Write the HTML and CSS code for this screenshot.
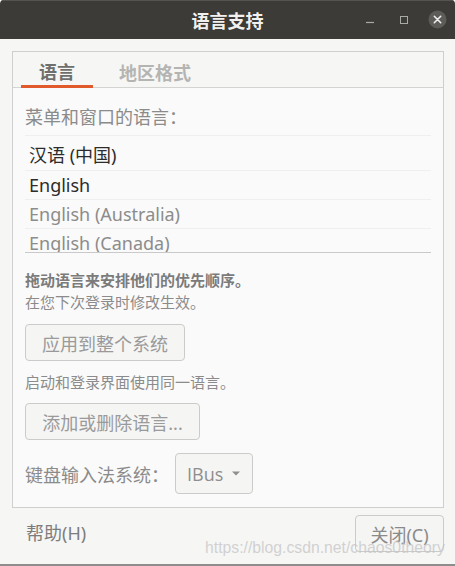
FILE: index.html
```html
<!DOCTYPE html>
<html lang="zh-CN">
<head>
<meta charset="utf-8">
<title>语言支持</title>
<link rel="stylesheet" href="styles.css">
</head>
<body>
<div class="window">
  <header class="titlebar">
    <div class="tb-side"></div>
    <div class="title">语言支持</div>
    <div class="tb-side tb-controls">
      <svg class="controls" width="84" height="39" viewBox="0 0 84 39" aria-hidden="true">
        <line x1="2" y1="22.5" x2="10" y2="22.5" stroke="#a9a9a6" stroke-width="1.2"/>
        <rect x="36.5" y="16.5" width="7" height="7" fill="none" stroke="#a9a9a6" stroke-width="1"/>
        <circle cx="73.5" cy="19.5" r="9" fill="#5d5c58"/>
        <path d="M70.3 16.3 L76.7 22.7 M76.7 16.3 L70.3 22.7" stroke="#efefef" stroke-width="1.6" stroke-linecap="round"/>
      </svg>
    </div>
  </header>

  <main class="main">
    <section class="notebook">
      <nav class="tabs">
        <div class="tab active">语言</div>
        <div class="tab">地区格式</div>
      </nav>
      <div class="page">
        <div class="label">菜单和窗口的语言：</div>
        <div class="langlist">
          <div class="row row-first dark">汉语 (中国)</div>
          <div class="row dark">English</div>
          <div class="row">English (Australia)</div>
          <div class="row">English (Canada)</div>
        </div>
        <p class="hint bold">拖动语言来安排他们的优先顺序。</p>
        <p class="hint">在您下次登录时修改生效。</p>
        <div class="btn btn-apply">应用到整个系统</div>
        <p class="hint hint-gap">启动和登录界面使用同一语言。</p>
        <div class="btn btn-add">添加或删除语言...</div>
        <div class="im-row">
          <span class="label">键盘输入法系统：</span>
          <div class="combo">
            <span class="combo-text">IBus</span>
            <svg class="combo-arrow" width="8" height="5" viewBox="0 0 8 5" aria-hidden="true"><path d="M0 0.5 H8 L4 4.5 Z" fill="#8e8e8e"/></svg>
          </div>
        </div>
      </div>
    </section>
    <footer class="footer">
      <span class="help">帮助(H)</span>
      <div class="btn btn-close">关闭(C)</div>
    </footer>
    <div class="watermark">https://blog.csdn.net/chaos0theory</div>
  </main>
</div>
</body>
</html>
```
FILE: styles.css
```css
* { box-sizing: border-box; }
html, body {
  margin: 0;
  padding: 0;
  background: #ffffff;
}
body {
  font-family: "Noto Sans", "Noto Sans CJK SC", sans-serif;
  font-size: 18px;
}
.window {
  width: 455px;
  height: 566px;
  display: flex;
  flex-direction: column;
  background: #f6f6f5;
  border-radius: 4px 4px 0 0;
  border-bottom: 2px solid #8d8d8d;
  overflow: hidden;
  position: relative;
}
.titlebar {
  height: 39px;
  flex: none;
  background: #3c3b37;
  display: grid;
  grid-template-columns: 1fr auto 1fr;
  align-items: center;
  border-top: 1px solid #55544f;
}
.title {
  color: #f2f1ef;
  font-weight: bold;
  font-size: 18px;
  line-height: 38px;
  font-family: "Noto Sans CJK SC", sans-serif;
}
.tb-controls {
  display: flex;
  justify-content: flex-end;
  padding-right: 7px;
  margin-top: -1px;
}
.controls { display: block; }

.main {
  flex: 1;
  display: flex;
  flex-direction: column;
  padding: 12px 11px 0 12px;
  position: relative;
}
.notebook {
  border: 1px solid #cfcfcd;
  display: flex;
  flex-direction: column;
}
.tabs {
  display: flex;
  height: 36px;
  border-bottom: 1px solid #d3d3d1;
  padding-left: 8px;
  background: #f6f6f5;
}
.tab {
  display: flex;
  align-items: center;
  padding: 4px 18px 0;
  font-weight: bold;
  color: #b4b4b2;
  font-family: "Noto Sans CJK SC", sans-serif;
}
.tab + .tab { margin-left: 8px; }
.tab.active {
  color: #6f6f6d;
  border-bottom: 3px solid #e05a2b;
  margin-bottom: -1px;
}
.page {
  background: #fafafa;
  padding: 16px 12px 13px;
  display: flex;
  flex-direction: column;
  align-items: flex-start;
}
.label {
  color: #8b8b8b;
  line-height: 24px;
  font-family: "Noto Sans CJK SC", sans-serif;
}
.langlist {
  align-self: stretch;
  margin-top: 7px;
  height: 118px;
  overflow: hidden;
  border-top: 1px solid #efefef;
  border-bottom: 1px solid #c9c9c9;
}
.row {
  height: 29px;
  padding: 0 0 0 4px;
  display: flex;
  align-items: center;
  border-bottom: 1px solid #efefef;
  color: #8c8c8c;
}
.row-first { height: 35px; padding-top: 2px; }
.row.dark { color: #2c2c2c; }

.hint {
  margin: 0;
  font-size: 15px;
  line-height: 22px;
  color: #8b8b8b;
  font-family: "Noto Sans CJK SC", sans-serif;
}
.hint.bold {
  margin-top: 16px;
  font-weight: bold;
  color: #7b7b7b;
}
.hint-gap { margin-top: 10px; }

.btn {
  height: 37px;
  border: 1px solid #cbcbc9;
  border-radius: 4px;
  background: #f5f5f4;
  color: #9a9a9a;
  display: flex;
  align-items: center;
  justify-content: center;
  padding: 0 16px;
  white-space: nowrap;
}
.btn-apply { margin-top: 11px; width: 160px; }
.btn-add { margin-top: 10px; width: 175px; }

.im-row {
  margin-top: 13px;
  display: flex;
  align-items: center;
}
.im-row .label { line-height: 24px; }
.combo {
  margin-left: 6px;
  height: 41px;
  width: 78px;
  border: 1px solid #cbcbc9;
  border-radius: 4px;
  background: #f5f5f4;
  color: #8e8e8e;
  display: flex;
  align-items: center;
  padding-left: 11px;
  gap: 9px;
}
.combo-text { font-family: "Open Sans", "Noto Sans", sans-serif; }
.combo-arrow { display: block; }

.footer {
  display: flex;
  justify-content: space-between;
  align-items: flex-start;
  padding: 7px 0 0 14px;
}
.help {
  line-height: 37px;
  color: #7d7d7d;
}
.btn-close {
  width: 89px;
  padding: 0;
  color: #8a8a8a;
}
.watermark {
  position: absolute;
  left: 205px;
  top: 500px;
  font-family: "Liberation Sans", sans-serif;
  font-size: 15.75px;
  line-height: 18px;
  color: rgba(196, 196, 196, 0.75);
  white-space: nowrap;
  pointer-events: none;
}
```
